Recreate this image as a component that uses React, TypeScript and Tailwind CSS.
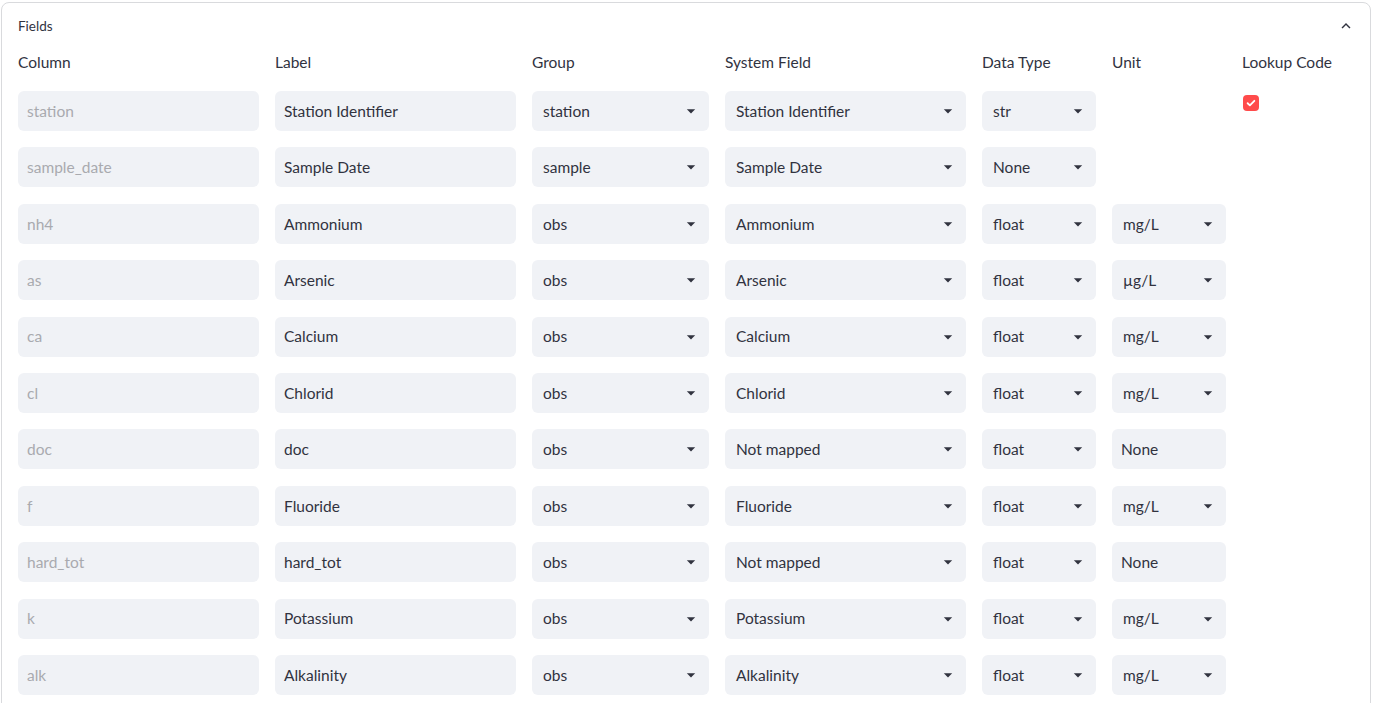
import React from "react";

type Row = {
  col: string;
  label: string;
  group: string;
  sys: string;
  dtype: string;
  unit: string | null;
  unitSelect: boolean;
  lookup: boolean;
};

const rows: Row[] = [
  { col: "station", label: "Station Identifier", group: "station", sys: "Station Identifier", dtype: "str", unit: null, unitSelect: false, lookup: true },
  { col: "sample_date", label: "Sample Date", group: "sample", sys: "Sample Date", dtype: "None", unit: null, unitSelect: false, lookup: false },
  { col: "nh4", label: "Ammonium", group: "obs", sys: "Ammonium", dtype: "float", unit: "mg/L", unitSelect: true, lookup: false },
  { col: "as", label: "Arsenic", group: "obs", sys: "Arsenic", dtype: "float", unit: "µg/L", unitSelect: true, lookup: false },
  { col: "ca", label: "Calcium", group: "obs", sys: "Calcium", dtype: "float", unit: "mg/L", unitSelect: true, lookup: false },
  { col: "cl", label: "Chlorid", group: "obs", sys: "Chlorid", dtype: "float", unit: "mg/L", unitSelect: true, lookup: false },
  { col: "doc", label: "doc", group: "obs", sys: "Not mapped", dtype: "float", unit: "None", unitSelect: false, lookup: false },
  { col: "f", label: "Fluoride", group: "obs", sys: "Fluoride", dtype: "float", unit: "mg/L", unitSelect: true, lookup: false },
  { col: "hard_tot", label: "hard_tot", group: "obs", sys: "Not mapped", dtype: "float", unit: "None", unitSelect: false, lookup: false },
  { col: "k", label: "Potassium", group: "obs", sys: "Potassium", dtype: "float", unit: "mg/L", unitSelect: true, lookup: false },
  { col: "alk", label: "Alkalinity", group: "obs", sys: "Alkalinity", dtype: "float", unit: "mg/L", unitSelect: true, lookup: false },
];

function Caret() {
  return (
    <svg viewBox="0 0 24 24" className="h-5 w-5 shrink-0" fill="#31333f">
      <path d="M7 10l5 5 5-5z" />
    </svg>
  );
}

function TextBox({ value, disabled }: { value: string; disabled?: boolean }) {
  return (
    <div
      className={`flex h-10 items-center rounded-[6px] bg-[#f0f2f6] pl-[9px] pt-[1px] ${
        disabled ? "text-[#a9aaaf]" : "text-[#31333f]"
      }`}
    >
      {value}
    </div>
  );
}

function SelectBox({ value }: { value: string }) {
  return (
    <div className="flex h-10 items-center justify-between rounded-[6px] bg-[#f0f2f6] pl-[11px] pr-2 text-[#31333f]">
      <span className="pt-[1px]">{value}</span>
      <Caret />
    </div>
  );
}

function Checkbox() {
  return (
    <div className="flex h-10 items-start pt-[4px] pl-[1px]">
      <div className="flex h-4 w-4 items-center justify-center rounded-[4px] bg-[#ff4b4b]">
        <svg viewBox="0 0 16 16" className="h-3 w-3" fill="none" stroke="white" strokeWidth="2.4" strokeLinecap="round" strokeLinejoin="round">
          <path d="M3.5 8.3l3 2.8 6-6" />
        </svg>
      </div>
    </div>
  );
}

const grid = "grid grid-cols-[241px_241px_177px_241px_114px_114px_1fr] gap-x-4";

export default function App() {
  return (
    <div
      className="min-h-screen bg-white pl-[1px] pr-[2px] pt-[2px] text-[15.5px] text-[#31333f]"
      style={{ fontFamily: "Lato, 'Noto Sans', sans-serif" }}
    >
      <div className="rounded-lg border border-[#d9dadd] pb-6">
        <div className="flex h-[46px] items-center justify-between px-4">
          <span className="text-[13.5px]">Fields</span>
          <svg viewBox="0 0 24 24" className="mr-[-1px] h-[18px] w-[18px]" fill="#31333f">
            <path d="M12 8l-6 6 1.41 1.41L12 10.83l4.59 4.58L18 14z" />
          </svg>
        </div>
        <div className="px-4 pt-[2px]">
          <div className={`${grid} h-6 items-center`}>
            <div>Column</div>
            <div>Label</div>
            <div>Group</div>
            <div>System Field</div>
            <div>Data Type</div>
            <div>Unit</div>
            <div>Lookup Code</div>
          </div>
          <div className={`${grid} mt-[16px] gap-y-[16.4px]`}>
            {rows.map((r) => (
              <React.Fragment key={r.col}>
                <TextBox value={r.col} disabled />
                <TextBox value={r.label} />
                <SelectBox value={r.group} />
                <SelectBox value={r.sys} />
                <SelectBox value={r.dtype} />
                {r.unit === null ? (
                  <div />
                ) : r.unitSelect ? (
                  <SelectBox value={r.unit} />
                ) : (
                  <TextBox value={r.unit} />
                )}
                {r.lookup ? <Checkbox /> : <div />}
              </React.Fragment>
            ))}
          </div>
        </div>
      </div>
    </div>
  );
}
